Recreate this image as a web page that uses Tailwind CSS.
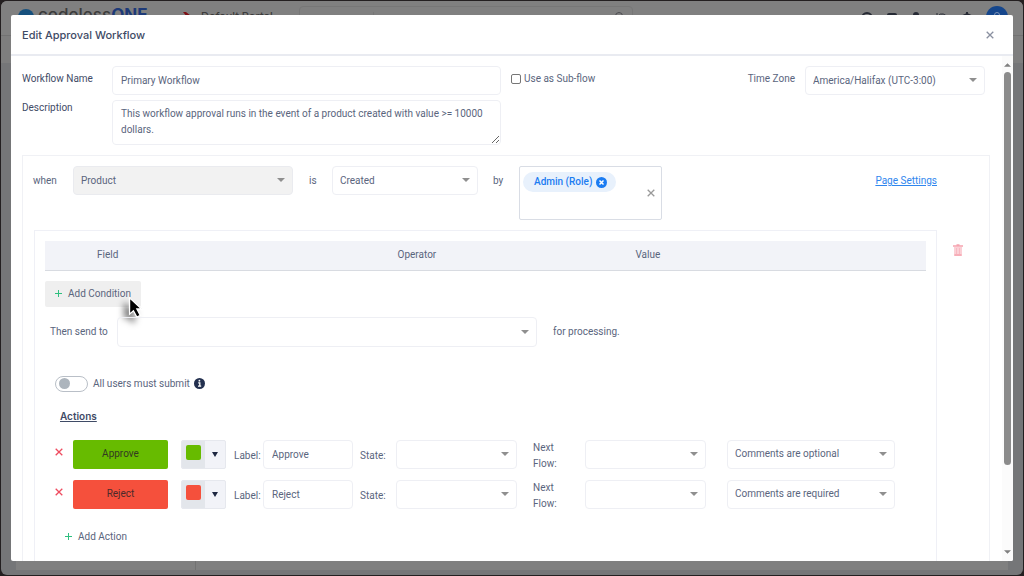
<!DOCTYPE html>
<html lang="en">
<head>
<meta charset="utf-8">
<title>Edit Approval Workflow</title>
<script src="https://cdn.jsdelivr.net/npm/@tailwindcss/browser@4"></script>
</head>
<body class="h-screen overflow-hidden bg-[#231f20] p-px font-['Roboto',sans-serif] text-[10px] leading-4 text-[#5a657d]">
<svg class="hidden">
  <symbol id="caret" viewBox="0 0 8 4"><path d="M0 0h8L4 4z" fill="#8f8f8f"/></symbol>
  <symbol id="cross" viewBox="0 0 8 8"><path d="M.7.7l6.600 6.600M7.300.7L.7 7.300" stroke="currentColor" stroke-width="1.300"/></symbol>
</svg>

<div class="relative flex h-full flex-col overflow-hidden rounded-md bg-[#757678]">
  <!-- Page behind the dialog -->
  <header class="flex h-[35px] shrink-0 items-start border-b border-[#727272] bg-[#808080] pr-[15px] pl-[17px] text-[#3c3c3c]">
    <svg class="mt-2 size-4" viewBox="0 0 16 16"><circle cx="8" cy="8" r="8" fill="#16507d"/><circle cx="8" cy="9" r="3" fill="#808080"/></svg>
    <span class="mt-1 ml-1 w-[145px] font-['Inter',sans-serif] text-[17px] leading-5 font-medium">codeless<b class="text-[#1d3a78]">ONE</b></span>
    <svg class="mt-[11px] size-2" viewBox="0 0 8 8"><path d="M0 0h3l5 4v4L4 5z" fill="#7d0f14"/></svg>
    <span class="mt-[7px] ml-2.5 w-[98px] font-['Inter',sans-serif] text-[11px] font-medium">Default Portal</span>
    <div class="mt-[5px] flex h-6 w-[334px] items-start rounded-sm border border-[#777] pt-[5px] pr-2 text-[#4c4c50]">
      <span class="w-[74px] border-r border-[#777] pl-2">All SKUs</span>
      <span class="flex-1 pl-2">Search</span>
      <svg class="size-2.5" viewBox="0 0 10 10" fill="none" stroke="#4c4c50"><circle cx="5" cy="4" r="3.500"/></svg>
    </div>
    <div class="ml-auto flex items-start gap-[13px] pt-[11px] text-[#262a34]">
      <svg class="size-3" viewBox="0 0 12 12"><circle cx="6" cy="6" r="5" fill="none" stroke="currentColor" stroke-width="2"/></svg>
      <svg class="size-3" viewBox="0 0 12 12"><rect x="1" y="1" width="10" height="8" rx="2" fill="currentColor"/></svg>
      <svg class="size-3" viewBox="0 0 12 12"><circle cx="5" cy="3" r="3" fill="currentColor"/></svg>
      <svg class="size-3" viewBox="0 0 12 12"><path d="M1 1v3h3M2 4a5 5 0 0 1 9 2" fill="none" stroke="currentColor"/></svg>
      <svg class="size-3" viewBox="0 0 12 12"><path d="M6 0v9M2 4l4-2 4 2" fill="none" stroke="currentColor" stroke-width="2"/></svg>
    </div>
    <svg class="mt-[5px] ml-[13px] size-[22px]" viewBox="0 0 22 22"><circle cx="11" cy="11" r="11" fill="#15468c"/><circle cx="11" cy="9" r="2.500" fill="none" stroke="#7f93b5"/></svg>
  </header>
  <div class="h-[27px] shrink-0 bg-[#7e7e7e]"></div>
  <div class="flex-1"></div>
  <div class="mx-[15px] flex h-5 shrink-0 bg-[#808080]"><div class="w-[180px] border-r border-[#727272]"></div></div>
  <div class="h-[5px] shrink-0"></div>

  <section role="dialog" aria-labelledby="title" class="absolute inset-x-2.5 top-3.5 bottom-3.5 flex flex-col overflow-hidden rounded-xs bg-white">
    <header class="flex h-[41px] shrink-0 items-center justify-between border-b-2 border-[#e9ebf1] pr-[19px] pl-[11px]">
      <h1 id="title" class="font-['Inter',sans-serif] text-[11px] font-medium text-[#3f4b66]">Edit Approval Workflow</h1>
      <button aria-label="Close" class="text-[#8a90a0]"><svg class="size-2"><use href="#cross"/></svg></button>
    </header>

    <div class="flex min-h-0 flex-1">
      <form class="flex min-w-0 flex-1 flex-col overflow-hidden pt-2.5 pl-[11px] pr-3">
        <div class="flex shrink-0 items-start pr-[5px]">
          <div class="grid w-[479px] grid-cols-[90px_1fr] gap-y-[5px] text-[#3f4b66]">
            <label for="name" class="pt-[5px]">Workflow Name</label>
            <input id="name" value="Primary Workflow" class="h-[29px] min-w-0 rounded-sm border border-[#eeeff4] px-2 text-[#5a657d]">
            <label for="desc">Description</label>
            <textarea id="desc" class="h-[45px] min-w-0 rounded-sm border border-[#eeeff4] px-2 py-[5px] text-[#5a657d]">This workflow approval runs in the event of a product created with value &gt;= 10000 dollars.</textarea>
          </div>
          <label class="ml-2.5 flex items-center gap-[3px] pt-[5px]"><input type="checkbox" class="size-2.5 appearance-none rounded-xs border border-[#767676]">Use as Sub-flow</label>
          <label for="tz" class="ml-auto pt-[5px]">Time Zone</label>
          <div class="relative ml-2.5 w-[180px]">
            <select id="tz" class="h-[29px] w-full appearance-none rounded-sm border border-[#eeeff4] pl-[7px]"><option>America/Halifax (UTC-3:00)</option></select>
            <svg class="pointer-events-none absolute top-3 right-2 h-1 w-2"><use href="#caret"/></svg>
          </div>
        </div>

        <fieldset class="mt-2.5 flex min-w-0 flex-1 flex-col border border-b-0 border-[#f0f1f5] pt-2.5 pl-2.5">
          <div class="flex h-[54px] shrink-0 items-start pr-[52px]">
            <label for="entity" class="w-10 pt-[7px]">when</label>
            <div class="relative w-[220px]">
              <select id="entity" disabled class="h-[29px] w-full appearance-none rounded-sm border border-[#eaebef] bg-[#f2f2f2] pl-[7px] opacity-100"><option>Product</option></select>
              <svg class="pointer-events-none absolute top-3 right-2 h-1 w-2"><use href="#caret"/></svg>
            </div>
            <label for="event" class="w-[39px] pt-[7px] pl-4">is</label>
            <div class="relative w-[146px]">
              <select id="event" class="h-[29px] w-full appearance-none rounded-sm border border-[#eeeff4] pl-[7px]"><option>Created</option></select>
              <svg class="pointer-events-none absolute top-3 right-2 h-1 w-2"><use href="#caret"/></svg>
            </div>
            <span class="w-[41px] pt-[7px] pl-[15px]">by</span>
            <div class="flex h-full w-[143px] items-start justify-between rounded-xs border border-[#d9dde5] pt-[5px] pr-1.5 pl-[3px]">
              <span class="flex h-5 items-center gap-1 rounded-full bg-[#e8f1fc] pr-[9px] pl-[11px] font-medium text-[#1b7cf2]">Admin (Role)
                <button type="button" aria-label="Remove Admin (Role)"><svg class="size-[11px]" viewBox="0 0 11 11"><circle cx="5.500" cy="5.500" r="5.500" fill="#1b7cf2"/><path d="M3.500 3.500l4 4M7.500 3.500l-4 4" stroke="#fff" stroke-width="1.500"/></svg></button>
              </span>
              <button type="button" aria-label="Clear" class="self-center pb-1.5 text-[#999]"><svg class="size-2"><use href="#cross"/></svg></button>
            </div>
            <a href="#page-settings" class="ml-auto pt-[7px] text-[#2f86ee] underline">Page Settings</a>
          </div>

          <div class="mt-2.5 ml-px flex min-h-0 flex-1">
            <div class="min-w-0 flex-1 border border-b-0 border-[#eff0f6] px-2.5 pt-2.5">
              <table class="w-full table-fixed">
                <thead><tr class="h-[29px] border-b border-[#d8dbe1] bg-[#f2f3f8] text-left">
                  <th class="w-[34%] pl-[52px] font-normal">Field</th><th class="w-[32%] pl-[53px] font-normal">Operator</th><th class="pl-[9px] font-normal">Value</th>
                </tr></thead>
              </table>
              <div class="relative mt-2.5 w-fit">
                <button type="button" class="flex h-[26px] items-center gap-1.5 rounded-xs bg-[#efefef] px-2.5"><svg class="size-[7px]" viewBox="0 0 7 7"><path d="M3.500 0v7M0 3.500h7" stroke="#2fbf7f"/></svg>Add Condition</button>
                <svg class="absolute top-[15px] right-[-10px] h-[26px] w-[24px] overflow-visible drop-shadow-[-5px_5px_3px_rgba(0,0,0,0.5)]" viewBox="0 0 28 30"><path d="M3 2v19l4.500-4 4 7.500 4-2-4-7.500H17z" fill="#000" stroke="#fff" stroke-width="1.500"/></svg>
              </div>
              <div class="mt-2.5 flex items-center pl-[5px]">
                <label for="send" class="w-[67px]">Then send to</label>
                <div class="relative w-[420px]">
                  <select id="send" class="h-[30px] w-full appearance-none rounded-sm border border-[#eeeff4]"><option></option></select>
                  <svg class="pointer-events-none absolute top-[13px] right-2 h-1 w-2"><use href="#caret"/></svg>
                </div>
                <span class="ml-4">for processing.</span>
              </div>
              <div class="mt-[29px] flex items-center pl-2.5">
                <label class="flex items-center gap-[5px]"><input type="checkbox" role="switch" class="flex h-4 w-[33px] appearance-none items-center rounded-full border border-[#b9bfc7] pl-[3px] before:size-[11px] before:rounded-full before:bg-[#adb5bd]">All users must submit</label>
                <svg class="ml-1 size-[11px]" viewBox="0 0 11 11"><circle cx="5.500" cy="5.500" r="5.500" fill="#23304f"/><path d="M4.200 4.800h1.600v3.200M4 8.200h3.200" stroke="#fff" stroke-width="1.300" fill="none"/><circle cx="5.400" cy="2.700" r=".9" fill="#fff"/></svg>
              </div>
              <h2 class="mt-4 pl-[15px] font-['Inter',sans-serif] font-semibold text-[#3f4b66] underline">Actions</h2>

              <div class="mt-4 grid gap-y-[11px] pl-2.5">
                <div class="flex h-[29px] items-center">
                  <button type="button" aria-label="Delete Approve" class="w-[18px] pb-1 text-[#ee4b5f]"><svg class="size-2"><use href="#cross"/></svg></button>
                  <button type="button" class="h-[29px] w-[95px] rounded-xs bg-[#67bb00] text-[#333a20]">Approve</button>
                  <button type="button" aria-label="Approve colour" class="ml-[13px] flex h-[29px] w-[45px] items-center overflow-hidden rounded-xs border border-[#e6e8ee] bg-[#f2f3f8]"><span class="flex h-full w-[23px] justify-center bg-[#e3e6eb] pt-1"><i class="size-[15px] rounded-xs bg-[#67bb00]"></i></span><svg class="mx-auto h-[5px] w-1.5" viewBox="0 0 6 5"><path d="M0 0h6L3 5z" fill="#1d2740"/></svg></button>
                  <label for="label1" class="ml-2 w-[29px] pt-[3px]">Label:</label>
                  <input id="label1" value="Approve" class="h-[29px] w-[90px] rounded-sm border border-[#eeeff4] px-2">
                  <label for="state1" class="ml-[7px] w-9 pt-[3px]">State:</label>
                  <div class="relative w-[121px]"><select id="state1" class="h-[29px] w-full appearance-none rounded-sm border border-[#eeeff4]"><option></option></select><svg class="pointer-events-none absolute top-3 right-2 h-1 w-2"><use href="#caret"/></svg></div>
                  <label for="flow1" class="ml-4 w-[52px] pt-[3px] pr-5">Next Flow:</label>
                  <div class="relative w-[121px]"><select id="flow1" class="h-[29px] w-full appearance-none rounded-sm border border-[#eeeff4]"><option></option></select><svg class="pointer-events-none absolute top-3 right-2 h-1 w-2"><use href="#caret"/></svg></div>
                  <div class="relative ml-[21px] w-[168px]"><select aria-label="Approve comments" class="h-[29px] w-full appearance-none rounded-sm border border-[#eeeff4] pl-[7px]"><option>Comments are optional</option></select><svg class="pointer-events-none absolute top-3 right-2 h-1 w-2"><use href="#caret"/></svg></div>
                </div>
                <div class="flex h-[29px] items-center">
                  <button type="button" aria-label="Delete Reject" class="w-[18px] pb-1 text-[#ee4b5f]"><svg class="size-2"><use href="#cross"/></svg></button>
                  <button type="button" class="h-[29px] w-[95px] rounded-xs bg-[#f5503c] text-[#4d2a2a]">Reject</button>
                  <button type="button" aria-label="Reject colour" class="ml-[13px] flex h-[29px] w-[45px] items-center overflow-hidden rounded-xs border border-[#e6e8ee] bg-[#f2f3f8]"><span class="flex h-full w-[23px] justify-center bg-[#e3e6eb] pt-1"><i class="size-[15px] rounded-xs bg-[#f5503c]"></i></span><svg class="mx-auto h-[5px] w-1.5" viewBox="0 0 6 5"><path d="M0 0h6L3 5z" fill="#1d2740"/></svg></button>
                  <label for="label2" class="ml-2 w-[29px] pt-[3px]">Label:</label>
                  <input id="label2" value="Reject" class="h-[29px] w-[90px] rounded-sm border border-[#eeeff4] px-2">
                  <label for="state2" class="ml-[7px] w-9 pt-[3px]">State:</label>
                  <div class="relative w-[121px]"><select id="state2" class="h-[29px] w-full appearance-none rounded-sm border border-[#eeeff4]"><option></option></select><svg class="pointer-events-none absolute top-3 right-2 h-1 w-2"><use href="#caret"/></svg></div>
                  <label for="flow2" class="ml-4 w-[52px] pt-[3px] pr-5">Next Flow:</label>
                  <div class="relative w-[121px]"><select id="flow2" class="h-[29px] w-full appearance-none rounded-sm border border-[#eeeff4]"><option></option></select><svg class="pointer-events-none absolute top-3 right-2 h-1 w-2"><use href="#caret"/></svg></div>
                  <div class="relative ml-[21px] w-[168px]"><select aria-label="Reject comments" class="h-[29px] w-full appearance-none rounded-sm border border-[#eeeff4] pl-[7px]"><option>Comments are required</option></select><svg class="pointer-events-none absolute top-3 right-2 h-1 w-2"><use href="#caret"/></svg></div>
                </div>
              </div>
              <button type="button" class="mt-5 ml-5 flex items-center gap-1.5"><svg class="size-[7px]" viewBox="0 0 7 7"><path d="M3.500 0v7M0 3.500h7" stroke="#2fbf7f"/></svg>Add Action</button>
            </div>
            <button type="button" aria-label="Delete condition group" class="w-[52px] self-start pt-3.5 pl-4"><svg class="h-3 w-2.5" viewBox="0 0 10 12"><path d="M1 3h8v9H1z" fill="#fbd0d6"/><path d="M0 2h10M3.500 1h3M1.500 11h7" stroke="#f6a3af" stroke-width="1.300"/><path d="M3.500 4v6M6.500 4v6" stroke="#f8b9c2"/></svg></button>
          </div>
        </fieldset>
      </form>

      <div class="flex w-[11px] shrink-0 flex-col items-center bg-[#fbfbfb] py-[7px]" aria-hidden="true">
        <svg class="h-1 w-[7px] shrink-0 rotate-180" viewBox="0 0 8 4"><path d="M0 0h8L4 4z" fill="#808080"/></svg>
        <div class="mt-[5px] h-[80%] w-[7px] rounded-full bg-[#8b8b8b]"></div>
        <svg class="mt-auto h-1 w-[7px] shrink-0" viewBox="0 0 8 4"><path d="M0 0h8L4 4z" fill="#808080"/></svg>
      </div>
    </div>
  </section>
</div>
</body>
</html>
